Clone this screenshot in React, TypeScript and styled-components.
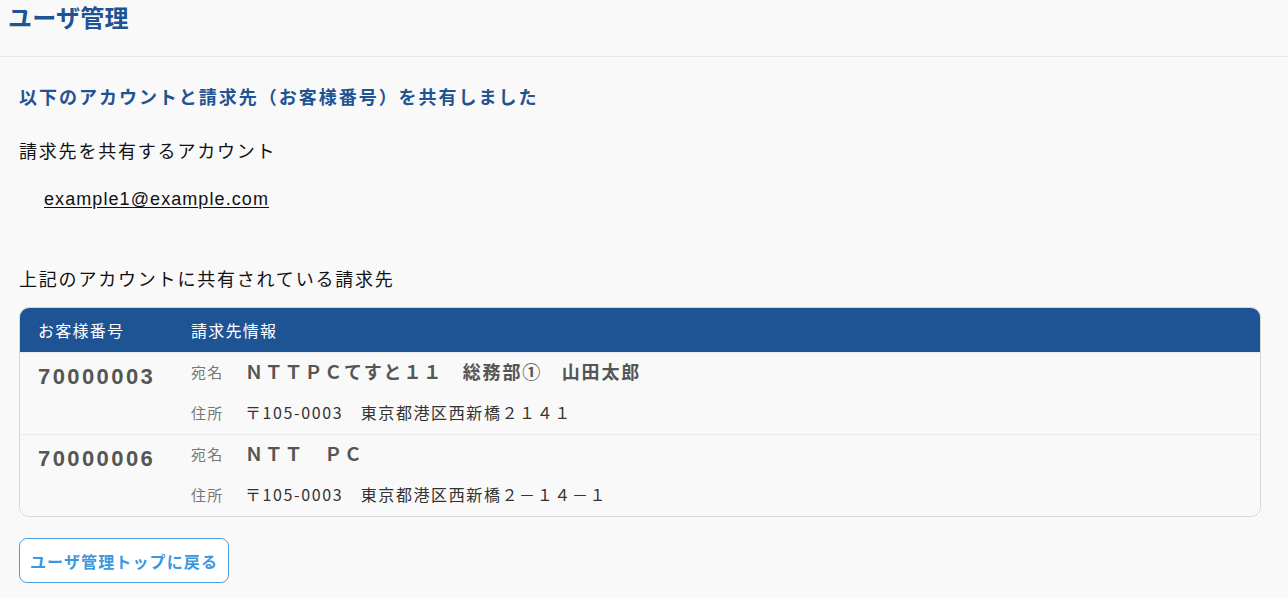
import { FC } from 'react'
import styled, { createGlobalStyle } from 'styled-components'

const GlobalStyle = createGlobalStyle`
  html, body {
    margin: 0;
    padding: 0;
    background: #f9f9f9;
  }
  body {
    font-family: "Liberation Sans", "Noto Sans CJK JP", sans-serif;
    color: #222;
  }
`

const jp = `"Noto Sans CJK JP", "Liberation Sans", sans-serif`

const Page = styled.div`
  min-height: 100vh;
`

const TopBar = styled.header`
  height: 56px;
  padding: 0 8px;
  border-bottom: 1px solid #e6e6e6;
`

const PageTitle = styled.h1`
  margin: 0;
  font-family: ${jp};
  font-size: 24px;
  line-height: 34px;
  font-weight: 700;
  letter-spacing: 0.01em;
  color: #1f5494;
`

const Main = styled.main`
  padding: 26px 27px 0 19px;
`

const Lead = styled.h2`
  margin: 0;
  font-family: ${jp};
  font-size: 18px;
  line-height: 27px;
  letter-spacing: 0.11em;
  font-weight: 700;
  color: #1f5494;
`

const Label = styled.p<{ $gap: number }>`
  margin: ${p => p.$gap}px 0 0;
  font-family: ${jp};
  font-size: 18px;
  line-height: 27px;
  letter-spacing: 0.1em;
  color: #111;
`

const Mail = styled.a`
  display: inline-block;
  margin: 22px 0 0 25px;
  font-family: "Liberation Sans", "Noto Sans CJK JP", sans-serif;
  font-size: 18px;
  line-height: 27px;
  letter-spacing: 0.06em;
  color: #111;
  text-decoration: underline;
  text-underline-offset: 2px;
`

const Table = styled.div`
  margin-top: 15px;
  border: 1px solid #d6d6d6;
  border-radius: 10px;
  overflow: hidden;
  font-family: ${jp};
`

const Row = styled.div<{ $head?: boolean }>`
  display: grid;
  grid-template-columns: 171px 1fr;
  background: ${p => (p.$head ? '#1f5494' : '#f9f9f9')};
  color: ${p => (p.$head ? '#fff' : '#555')};
  & + & {
    border-top: 1px solid #ececec;
  }
`

const HeadCell = styled.div<{ $first?: boolean }>`
  padding-left: ${p => (p.$first ? 18 : 0)}px;
  height: 44px;
  display: flex;
  align-items: center;
  font-size: 16px;
  letter-spacing: 0.08em;
`

const Number = styled.div`
  padding: 10px 0 0 18px;
  font-family: "Liberation Sans", "Noto Sans CJK JP", sans-serif;
  font-size: 22px;
  line-height: 28px;
  font-weight: 700;
  letter-spacing: 0.11em;
  color: #555;
`

const Info = styled.div`
  display: flex;
  flex-direction: column;
  gap: 15px;
  padding: 4px 0 10px;
`

const Line = styled.div`
  display: flex;
  align-items: center;
`

const Key = styled.span`
  width: 54px;
  flex: none;
  font-size: 15px;
  letter-spacing: 0.08em;
  color: #777;
`

const Addressee = styled.span`
  font-size: 18px;
  line-height: 28px;
  font-weight: 700;
  letter-spacing: 0.1em;
  color: #555;
`

const Address = styled.span`
  font-size: 16px;
  line-height: 24px;
  letter-spacing: 0.1em;
  color: #333;
`

const BackButton = styled.button`
  margin-top: 21px;
  height: 45px;
  padding: 0 10px;
  background: #fff;
  border: 1px solid #4a9fe0;
  border-radius: 8px;
  font-family: ${jp};
  font-size: 16px;
  font-weight: 700;
  letter-spacing: 0.07em;
  color: #3b98de;
  cursor: pointer;
`

const accounts = [
  {
    no: '70000003',
    name: 'ＮＴＴＰＣてすと１１　総務部①　山田太郎',
    address: '〒105-0003　東京都港区西新橋２１４１',
  },
  {
    no: '70000006',
    name: 'ＮＴＴ　ＰＣ',
    address: '〒105-0003　東京都港区西新橋２－１４－１',
  },
]

const App: FC = () => {
  return (
    <Page>
      <GlobalStyle />
      <TopBar>
        <PageTitle>ユーザ管理</PageTitle>
      </TopBar>
      <Main>
        <Lead>以下のアカウントと請求先（お客様番号）を共有しました</Lead>
        <Label $gap={27}>請求先を共有するアカウント</Label>
        <Mail href="#">example1@example.com</Mail>
        <Label $gap={52}>上記のアカウントに共有されている請求先</Label>

        <Table>
          <Row $head>
            <HeadCell $first>お客様番号</HeadCell>
            <HeadCell>請求先情報</HeadCell>
          </Row>
          {accounts.map(a => (
            <Row key={a.no}>
              <Number>{a.no}</Number>
              <Info>
                <Line>
                  <Key>宛名</Key>
                  <Addressee>{a.name}</Addressee>
                </Line>
                <Line>
                  <Key>住所</Key>
                  <Address>{a.address}</Address>
                </Line>
              </Info>
            </Row>
          ))}
        </Table>

        <BackButton>ユーザ管理トップに戻る</BackButton>
      </Main>
    </Page>
  )
}
export default App
